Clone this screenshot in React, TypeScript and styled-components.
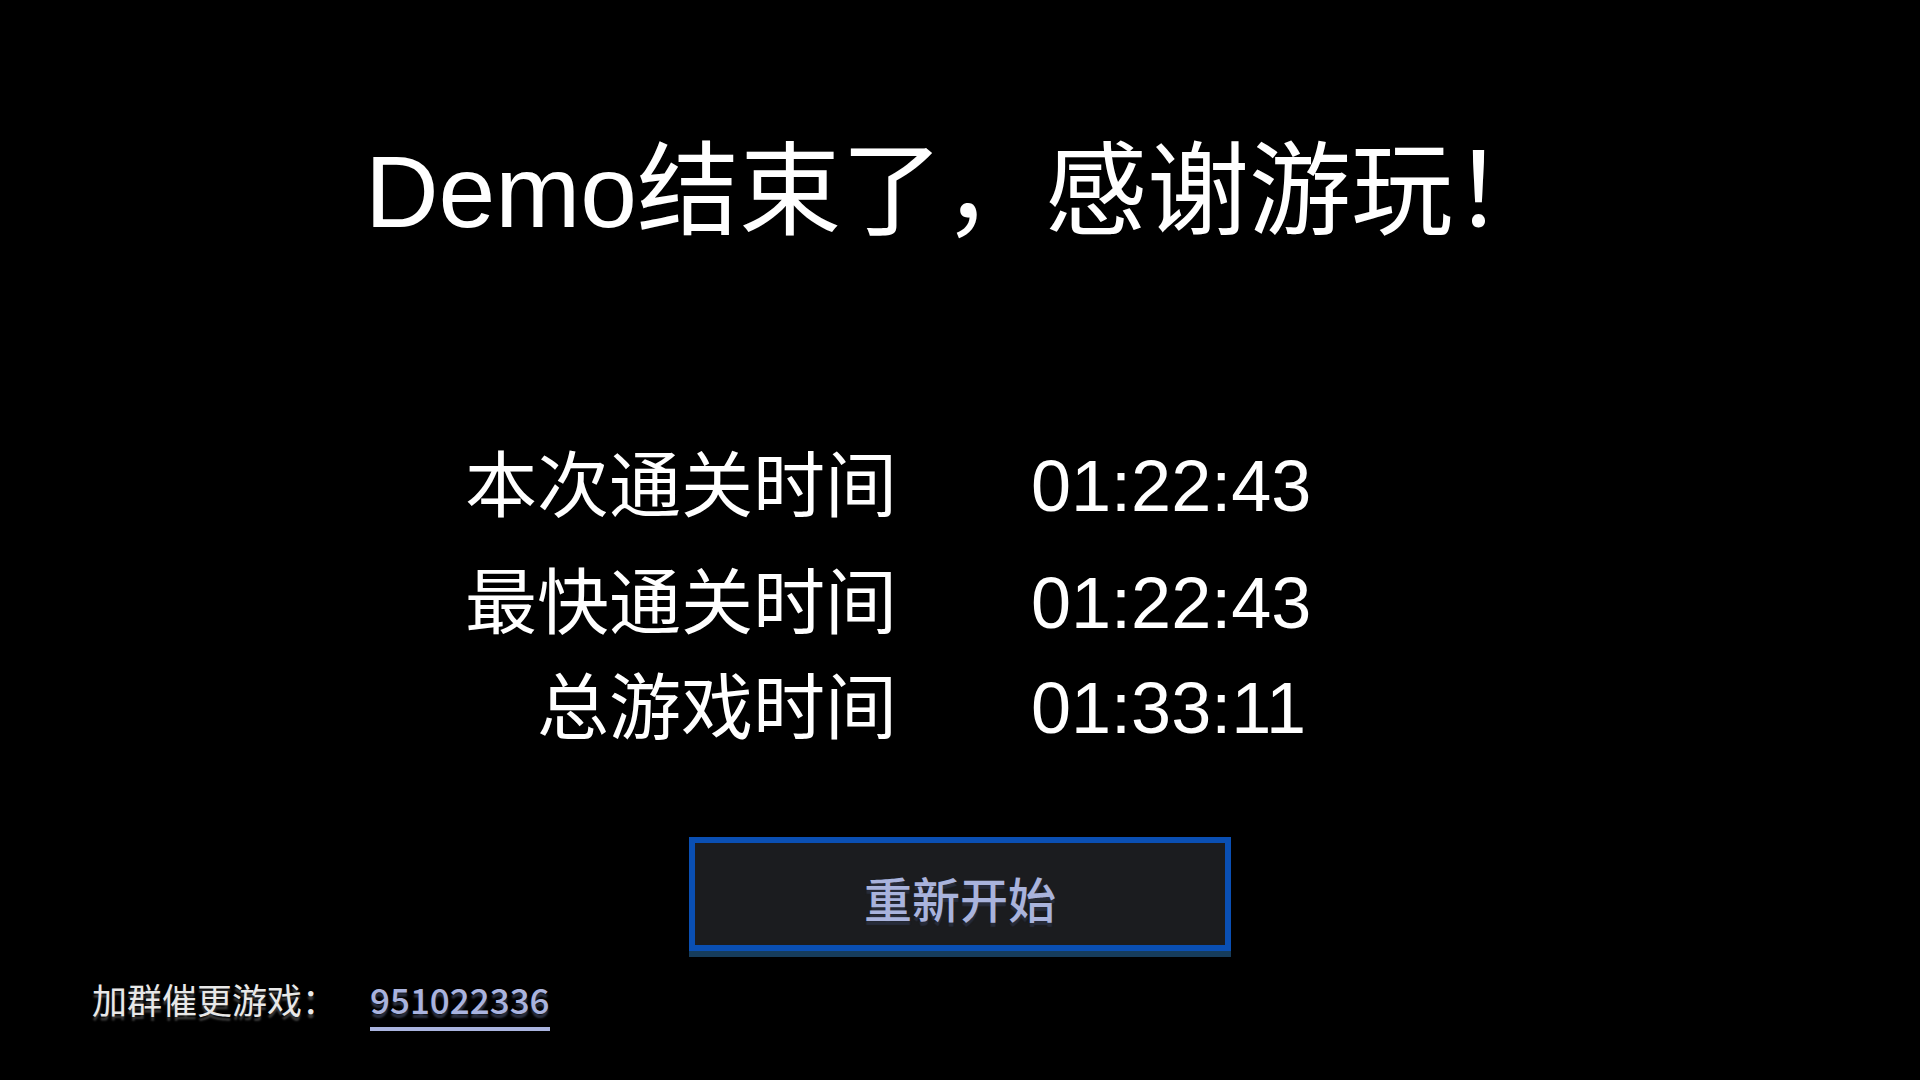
import React from 'react';
import styled, { createGlobalStyle } from 'styled-components';

const GlobalStyle = createGlobalStyle`
  html, body {
    margin: 0;
    padding: 0;
    background: #000;
  }
`;

const Screen = styled.div`
  width: 1920px;
  height: 1080px;
  background: #000;
  display: flex;
  flex-direction: column;
  overflow: hidden;
  font-family: "Liberation Sans", "Noto Sans CJK SC", sans-serif;
  color: #fff;
`;

const Title = styled.h1`
  margin: 141px 0 0;
  font-size: 102px;
  line-height: 102px;
  font-weight: 400;
  text-align: center;
  white-space: nowrap;
`;

// label column right-aligned, value column left-aligned
const StatsGrid = styled.div`
  margin-top: 207px;
  display: grid;
  grid-template-columns: 897px 1fr;
  grid-template-rows: 117px 105px 72px;
  column-gap: 134px;
  font-size: 72px;
  line-height: 72px;
`;

const StatLabel = styled.div`
  text-align: right;
  white-space: nowrap;
`;

const StatValue = styled.div`
  text-align: left;
  white-space: nowrap;
`;

const RestartButton = styled.button`
  align-self: center;
  margin-top: 93px;
  width: 542px;
  height: 114px;
  box-sizing: border-box;
  padding: 6px 0 0;
  border: 6px solid #0a4fb3;
  border-radius: 0;
  background: #1b1c1f;
  box-shadow: 0 6px 0 #163c5b;
  display: flex;
  align-items: center;
  justify-content: center;
  font-family: "Noto Sans CJK SC", sans-serif;
  font-size: 48px;
  line-height: 48px;
  font-weight: 500;
  color: #a9b3dc;
  text-shadow: 0 4px 1px #272c3a;
  cursor: pointer;
`;

const Footer = styled.div`
  margin-top: 30px;
  padding-left: 92px;
  display: flex;
  align-items: flex-start;
  gap: 33px;
  font-family: "Noto Sans CJK SC", sans-serif;
  font-size: 35px;
  line-height: 35px;
`;

const FooterLabel = styled.span`
  color: #e8e8e8;
  text-shadow: 0 4px 2px #3a3a3a;
`;

const GroupLink = styled.span`
  display: inline-block;
  color: #a9b3de;
  font-weight: 500;
  padding-bottom: 11px;
  border-bottom: 4px solid #a9b3de;
  text-shadow: 0 4px 2px #2b3040;
  cursor: pointer;
`;

const stats = [
  { label: '本次通关时间', value: '01:22:43' },
  { label: '最快通关时间', value: '01:22:43' },
  { label: '总游戏时间', value: '01:33:11' },
];

const App = () => {
  return (
    <>
      <GlobalStyle />
      <Screen>
        <Title>Demo结束了，感谢游玩！</Title>

        <StatsGrid>
          {stats.map(stat => (
            <React.Fragment key={stat.label}>
              <StatLabel>{stat.label}</StatLabel>
              <StatValue>{stat.value}</StatValue>
            </React.Fragment>
          ))}
        </StatsGrid>

        <RestartButton type="button">重新开始</RestartButton>

        <Footer>
          <FooterLabel>加群催更游戏：</FooterLabel>
          <GroupLink>951022336</GroupLink>
        </Footer>
      </Screen>
    </>
  );
};

export default App;
